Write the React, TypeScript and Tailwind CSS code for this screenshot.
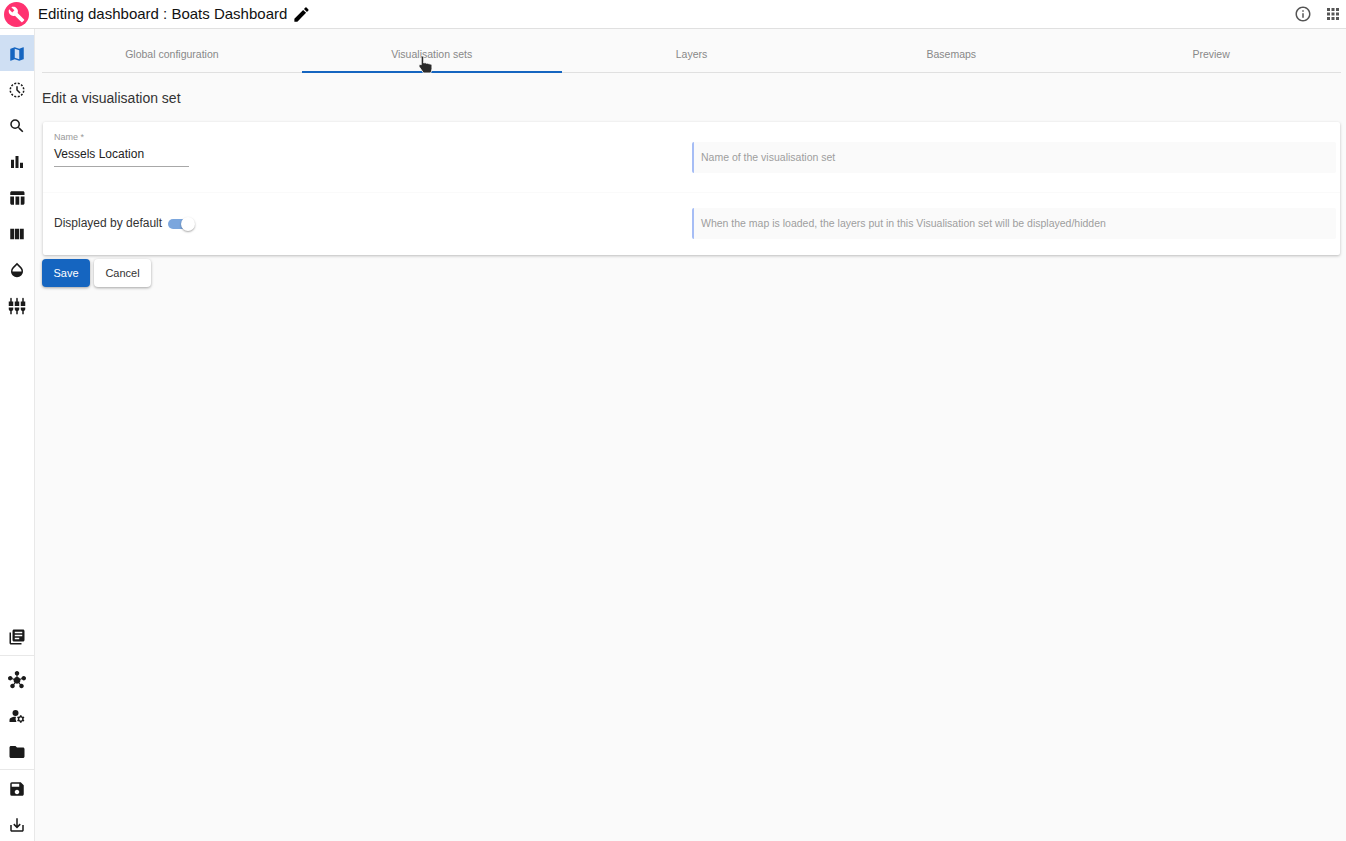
import React from 'react';
import {
  MdApps,
  MdBarChart,
  MdBuild,
  MdEdit,
  MdFolder,
  MdHistoryToggleOff,
  MdHub,
  MdInfoOutline,
  MdLibraryBooks,
  MdManageAccounts,
  MdMap,
  MdOpacity,
  MdSave,
  MdSaveAlt,
  MdSearch,
  MdSettingsInputComponent,
  MdTableChart,
  MdViewColumn,
} from 'react-icons/md';

const topItems = [
  MdMap,
  MdHistoryToggleOff,
  MdSearch,
  MdBarChart,
  MdTableChart,
  MdViewColumn,
  MdOpacity,
  MdSettingsInputComponent,
];

const tabs = ['Global configuration', 'Visualisation sets', 'Layers', 'Basemaps', 'Preview'];

const Hint: React.FC<{ text: string }> = ({ text }) => (
  <div className="w-[644px] h-[31px] flex items-center pl-[7px] bg-[#fafafa] border-l-2 border-[#a6bdf5] rounded-[2px] text-[10.5px] text-[#9e9e9e]">
    {text}
  </div>
);

const SideItem: React.FC<{ icon: React.ElementType; active?: boolean }> = ({ icon: Icon, active }) => (
  <div
    className={`h-9 flex items-center justify-center pr-px ${active ? '-mt-px mb-px pt-[2px] bg-[#cfdff3] text-[#1565c0]' : 'text-[#1a1a1a]'}`}
  >
    <Icon size={18} />
  </div>
);

const App: React.FC = () => {
  return (
    <div className="w-[1346px] h-[841px] overflow-hidden flex flex-col bg-[#fafafa] font-['Liberation_Sans',Arial,sans-serif]">
      <header className="h-[29px] shrink-0 flex items-center bg-white border-b border-[#e0e0e0]">
        <div className="ml-[4px] w-[25px] h-[25px] rounded-full bg-[#ff3270] flex items-center justify-center text-white">
          <MdBuild size={17} />
        </div>
        <span className="ml-[9px] text-[15px] text-[#111]">Editing dashboard : Boats Dashboard</span>
        <MdEdit size={19} className="ml-[5px] text-black" />
        <div className="ml-auto flex items-center mr-[4px] gap-[12px] text-[#555]">
          <MdInfoOutline size={18} />
          <MdApps size={18} />
        </div>
      </header>

      <div className="flex-1 flex min-h-0">
        <aside className="w-[35px] shrink-0 flex flex-col bg-white border-r border-[#e8e8e8] pt-[7px]">
          {topItems.map((icon, i) => (
            <SideItem key={i} icon={icon} active={i === 0} />
          ))}
          <div className="mt-auto -mb-[2px]">
            <SideItem icon={MdLibraryBooks} />
            <div className="border-t border-[#e8e8e8] pt-[6px] -mb-px">
              <SideItem icon={MdHub} />
              <SideItem icon={MdManageAccounts} />
              <SideItem icon={MdFolder} />
            </div>
            <div className="border-t border-[#e8e8e8] pt-[1px]">
              <SideItem icon={MdSave} />
              <SideItem icon={MdSaveAlt} />
            </div>
          </div>
        </aside>

        <main className="flex-1 min-w-0 pl-[7px] pr-[5px]">
          <div className="relative flex h-[44px] border-b border-[#e0e0e0]">
            {tabs.map((tab, i) => (
              <div
                key={tab}
                className={`flex-1 flex items-center justify-center pt-[9px] text-[10.5px] text-[#888] border-b-2 -mb-px ${i === 1 ? 'border-[#1565c0]' : 'border-transparent'}`}
              >
                {tab}
              </div>
            ))}
            <svg
              viewBox="0 0 14 20"
              preserveAspectRatio="none"
              className="absolute left-[376px] top-[26px] w-[16px] h-[20px]"
            >
              <path
                d="M3.500 1c.9 0 1.500.7 1.500 1.600V8l.9-.2c.6-.1 1.100.1 1.400.5.500-.3 1.200-.2 1.600.3.500-.2 1.200 0 1.500.5.900-.1 1.800.5 1.800 1.500v3.200c0 1.900-.6 3.200-1.200 4.200H4.800L1.200 12c-.6-.8-.5-1.700.2-2.200.4-.3 1-.3 1.400 0V2.600C2 1.700 2.600 1 3.500 1z"
                fill="#2b2b2b"
                stroke="#ffffff"
                strokeWidth="0.8"
              />
            </svg>
          </div>

          <h2 className="mt-[16px] text-[14px] leading-[18px] text-[#333]">Edit a visualisation set</h2>

          <section className="mt-[15px] ml-px w-[1297px] h-[133px] bg-white rounded-[2px] shadow-[0_1px_3px_rgba(0,0,0,0.25)]">
            <div className="h-[71px] flex border-b border-[#fafafa]">
              <div className="w-[649px] pl-[11px] pt-[10px]">
                <div className="text-[9px] leading-[11px] text-[#999]">Name *</div>
                <div className="w-[135px] h-[24px] pt-[2px] border-b border-[#a8a8a8] text-[12px] leading-[18px] text-[#222]">
                  Vessels Location
                </div>
              </div>
              <div className="pt-[20px]">
                <Hint text="Name of the visualisation set" />
              </div>
            </div>
            <div className="flex">
              <div className="w-[649px] pl-[11px] pt-[21px] flex items-start">
                <span className="text-[12px] leading-[18px] text-[#333]">Displayed by default</span>
                <div className="relative ml-[6px] mt-[5px] w-[24px] h-[10px] rounded-full bg-[#7ba6dd]">
                  <div className="absolute -right-[3px] -top-[2px] w-[14px] h-[14px] rounded-full bg-white shadow-[0_1px_2px_rgba(0,0,0,0.35)]" />
                </div>
              </div>
              <div className="pt-[15px]">
                <Hint text="When the map is loaded, the layers put in this Visualisation set will be displayed/hidden" />
              </div>
            </div>
          </section>

          <div className="mt-[4px] flex gap-[4px]">
            <button className="w-[48px] h-[28px] rounded-[4px] bg-[#1565c0] text-white text-[11px] shadow-[0_1px_3px_rgba(0,0,0,0.35)]">
              Save
            </button>
            <button className="w-[57px] h-[28px] rounded-[4px] bg-white text-[#333] text-[11px] shadow-[0_1px_3px_rgba(0,0,0,0.35)]">
              Cancel
            </button>
          </div>
        </main>
      </div>
    </div>
  );
};

export default App;
